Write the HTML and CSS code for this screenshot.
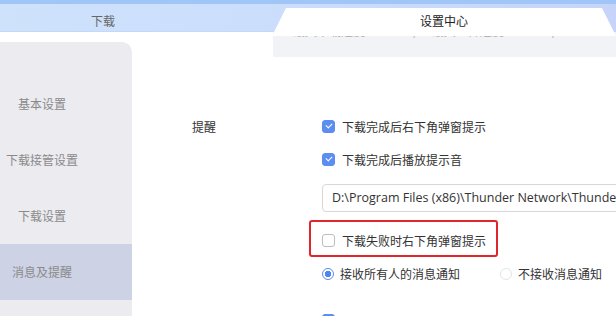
FILE: index.html
```html
<!DOCTYPE html>
<html lang="zh-CN">
<head>
  <meta charset="UTF-8">
  <title>设置中心</title>
  <link rel="stylesheet" href="styles.css">
</head>
<body>
  <div class="tabs">
    <div class="tab">下载</div>
    <div class="tab tab-active">设置中心</div>
  </div>

  <div class="content">
    <div class="sidebar">
      <div class="side-item">基本设置</div>
      <div class="side-item">下载接管设置</div>
      <div class="side-item">下载设置</div>
      <div class="side-item active">消息及提醒</div>
    </div>

    <div class="main">
      <div class="info-box">最大下载速度: 1024KB/s&nbsp;&nbsp;&nbsp;最大上传速度: 1024KB/s</div>

      <div class="section">
        <div class="label">提醒</div>
        <div class="controls">
          <div class="row"><span class="check checked"></span>下载完成后右下角弹窗提示</div>
          <div class="row"><span class="check checked"></span>下载完成后播放提示音</div>
          <div class="path-input">D:\Program Files (x86)\Thunder Network\Thunder\Program\sound\finish.wav</div>
          <div class="row highlight"><span class="check"></span>下载失败时右下角弹窗提示</div>
          <div class="row">
            <span class="radio checked"></span>接收所有人的消息通知
            <span class="radio second"></span>不接收消息通知
          </div>
          <div class="row last"><span class="check checked"></span></div>
        </div>
      </div>
    </div>
  </div>
</body>
</html>
```

FILE: styles.css
```css
* {
  margin: 0;
  padding: 0;
  box-sizing: border-box;
}

body {
  width: 616px;
  height: 316px;
  overflow: hidden;
  background: #fff;
  font-family: "Noto Sans CJK SC", "Noto Sans", sans-serif;
  font-size: 12px;
  color: #333;
}

/* Tab bar */
.tabs {
  display: flex;
  height: 32px;
  padding-top: 4px;
  background: linear-gradient(90deg, #cfe2fc 0%, #c9dcfb 60%, #c6d4fa 100%);
  border-top: 4px solid #9fc6f7;
  box-shadow: inset 0 -1px 0 #c5d8fa;
}

.tab {
  width: 273px;
  height: 28px;
  margin-top: -4px;
  padding-right: 66px;
  line-height: 34px;
  text-align: center;
  color: #666;
}

.tab-active {
  width: 344px;
  flex-shrink: 0;
  margin-top: 0;
  padding-right: 0;
  line-height: 26px;
  background: #fff;
  color: #222;
  border-radius: 8px 8px 0 0;
  clip-path: polygon(14px 0, 330px 0, 344px 28px, 0 28px);
}

/* Body */
.content {
  display: flex;
  height: 284px;
}

.sidebar {
  width: 132px;
  flex-shrink: 0;
  margin-top: 10px;
  padding-top: 34px;
  background: #ebebf0;
  border-top-right-radius: 10px;
}

.side-item {
  width: 84px;
  height: 56px;
  line-height: 56px;
  text-align: center;
  color: #8a8a8a;
  white-space: nowrap;
}

.side-item.active {
  width: 132px;
  padding-right: 48px;
  background: #cdd2e5;
}

.main {
  flex: 1;
  overflow: hidden;
}

.info-box {
  height: 39px;
  margin: -14px 0 0 141px;
  padding: 5px 0 0 20px;
  line-height: 16px;
  background: #f2f3f6;
  color: #a8a8a8;
  white-space: nowrap;
}

.section {
  display: flex;
  margin-top: 53px;
}

.label {
  width: 190px;
  flex-shrink: 0;
  padding-left: 60px;
  line-height: 33px;
  color: #333;
}

.controls {
  flex: 1;
  min-width: 0;
}

.row {
  display: flex;
  align-items: center;
  height: 33px;
  white-space: nowrap;
}

.row.highlight {
  width: 189px;
  height: 37px;
  margin: 8px 0 0 -13px;
  padding: 3px 0 0 11px;
  border: 2px solid #e0262b;
  border-radius: 3px;
}

.row.last {
  margin-top: 14px;
}

.check {
  width: 13px;
  height: 13px;
  flex-shrink: 0;
  margin-right: 7px;
  border: 1px solid #bdbdbd;
  border-radius: 3px;
  background: #fff;
  position: relative;
}

.check.checked {
  border-color: #5b8ef0;
  background: #5b8ef0;
}

.check.checked::after {
  content: "";
  position: absolute;
  left: 3px;
  top: 2px;
  width: 5px;
  height: 3px;
  border-left: 1.5px solid #fff;
  border-bottom: 1.5px solid #fff;
  transform: rotate(-45deg);
}

.radio {
  width: 12px;
  height: 12px;
  flex-shrink: 0;
  margin-right: 6px;
  border: 1px solid #c4c4c4;
  border-radius: 50%;
  background: #fff;
}

.radio.checked {
  border-color: #5b8ef0;
  background: radial-gradient(circle, #4f85ee 0 3px, #fff 3.5px);
}

.radio.second {
  margin-left: 40px;
  border-color: #e4e4e4;
}

.path-input {
  width: 320px;
  height: 28px;
  margin-top: 8px;
  padding-left: 9px;
  line-height: 26px;
  border: 1px solid #d8d8d8;
  border-radius: 4px;
  font-family: "Open Sans", "Noto Sans", sans-serif;
  font-size: 12.5px;
  color: #333;
  white-space: nowrap;
  overflow: hidden;
}
```
